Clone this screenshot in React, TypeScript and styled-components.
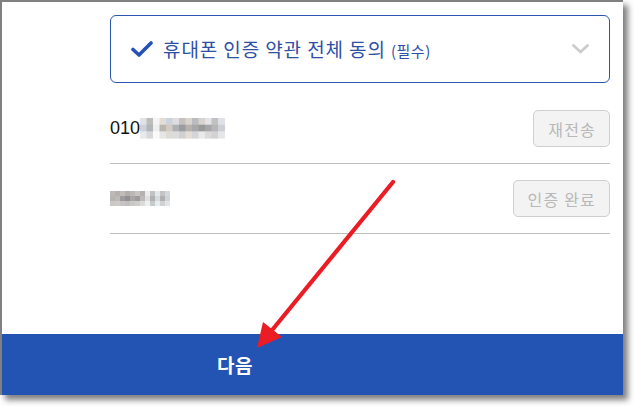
import React from "react";
import styled, { createGlobalStyle } from "styled-components";

const Global = createGlobalStyle`
  html, body { margin: 0; padding: 0; background: #ffffff; }
  body { font-family: "Liberation Sans", "Noto Sans CJK KR", sans-serif; }
`;

const Page = styled.div`
  position: relative;
  width: 634px;
  height: 406px;
  overflow: hidden;
  background: #ffffff;
`;

const Window = styled.div`
  width: 621px;
  height: 393px;
  border-top: 2px solid #808080;
  border-left: 2px solid #808080;
  box-shadow: 5px 5px 6px rgba(0, 0, 0, 0.5);
  background: #ffffff;
  display: flex;
  flex-direction: column;
`;

const Content = styled.div`
  flex: 1;
  padding: 13px 13px 0 108px;
  display: flex;
  flex-direction: column;
`;

const AgreeBox = styled.div`
  height: 66px;
  border: 1px solid #2c55b0;
  border-radius: 6px;
  display: flex;
  align-items: center;
  padding: 0 20px 0 20px;
  margin-bottom: 11px;
`;

const AgreeLabel = styled.span`
  flex: 1;
  margin-left: 10px;
  font-family: "Noto Sans CJK KR", sans-serif;
  font-size: 19px;
  letter-spacing: 0.9px;
  color: #2d4fa6;
  line-height: 1;
  padding-bottom: 2px;
`;

const Required = styled.span`
  font-size: 15px;
  letter-spacing: 0.5px;
`;

const Row = styled.div`
  display: flex;
  align-items: center;
  justify-content: space-between;
  padding: 16px 0;
  border-bottom: 1px solid #bdbdbd;
`;

const Value = styled.div`
  display: flex;
  align-items: center;
  font-family: "Liberation Sans", "Noto Sans CJK KR", sans-serif;
  font-size: 18px;
  color: #111111;
`;

const GhostButton = styled.button`
  height: 37px;
  padding: 0 13px 0 14px;
  border: 1px solid #cfcfcf;
  border-radius: 5px;
  background: #f3f3f3;
  color: #b8b8b8;
  font-family: "Noto Sans CJK KR", sans-serif;
  font-size: 16px;
  letter-spacing: 1.2px;
  line-height: 1;
  cursor: default;
`;

const Footer = styled.div`
  height: 61px;
  background: #2454b3;
  display: flex;
  align-items: center;
  padding-left: 215px;
  color: #ffffff;
  font-family: "Noto Sans CJK KR", sans-serif;
  font-weight: 700;
  font-size: 19px;
  letter-spacing: 0.5px;
`;

const ArrowLayer = styled.svg`
  position: absolute;
  left: 0;
  top: 0;
  pointer-events: none;
`;

type MosaicProps = { cols: number; rows: number; cellW: number; cellH: number; colors: string[] };

const Mosaic: React.FC<MosaicProps> = ({ cols, rows, cellW, cellH, colors }) => {
  const rects = [];
  for (let r = 0; r < rows; r++) {
    for (let c = 0; c < cols; c++) {
      rects.push(
        <rect
          key={`${r}-${c}`}
          x={c * cellW}
          y={r * cellH}
          width={cellW + 0.5}
          height={cellH + 0.5}
          fill={colors[(r * cols + c) % colors.length]}
        />
      );
    }
  }
  return (
    <svg width={cols * cellW} height={rows * cellH} style={{ display: "block" }}>
      {rects}
    </svg>
  );
};

const phoneColors = [
  "#dfe2e6", "#bdbdbb", "#f4f4f4", "#e3ddd6", "#cdd3dd", "#dedee2", "#c6c1bc", "#d9d4cf", "#babcbf", "#d9d3cf", "#e4e4e8", "#c1c1c1", "#e0e2e8",
  "#cdd1d9", "#b1b6ba", "#eeeeee", "#b9b5b1", "#d3cbc2", "#adb0b4", "#9a9ca1", "#b7b2ae", "#a8a8ab", "#999999", "#a6a6a9", "#b7b7bb", "#ccd0d4",
  "#e6e9ee", "#d8d8d8", "#fafafa", "#e6e6e6", "#dedbd6", "#dcdcdc", "#d0d0d0", "#e3ddd8", "#d5d5d8", "#e9e9e9", "#dadada", "#d2d2d2", "#e6e6ea",
];

const codeColors = [
  "#bdb9b7", "#b3b0ae", "#c1bcba", "#b0adab", "#bab7b6", "#c8c4c3", "#b5b3b2", "#ececec", "#c0c2c4", "#e2e9ee", "#c4c4c6", "#d4d8da",
  "#b7b3b1", "#bdb9b7", "#9d9b9c", "#918f93", "#a8a5a5", "#9c9a9b", "#bcbaba", "#e0e0e0", "#b2b1b2", "#d6dbdd", "#aeb0b2", "#cfd4d6",
  "#cbc8c6", "#cecac8", "#c6c4c3", "#c2bfbe", "#cac8c7", "#cfcccb", "#dbdada", "#efefef", "#c7caca", "#e6edf0", "#d0d2d4", "#e2e6e8",
];

const CheckIcon = () => (
  <svg width="22" height="16" viewBox="0 0 22 16">
    <path d="M2 8.5 L8 14 L20 2" fill="none" stroke="#2552b4" strokeWidth="3.6" strokeLinecap="round" strokeLinejoin="round" />
  </svg>
);

const ChevronIcon = () => (
  <svg width="17" height="10" viewBox="0 0 17 10">
    <path d="M1.5 1.5 L8.5 8 L15.5 1.5" fill="none" stroke="#cccccc" strokeWidth="2.8" strokeLinecap="round" strokeLinejoin="round" />
  </svg>
);

export default function App() {
  return (
    <>
      <Global />
      <Page>
        <Window>
          <Content>
            <AgreeBox>
              <CheckIcon />
              <AgreeLabel>
                휴대폰 인증 약관 전체 동의 <Required>(필수)</Required>
              </AgreeLabel>
              <ChevronIcon />
            </AgreeBox>
            <Row>
              <Value>
                010
                <Mosaic cols={13} rows={3} cellW={6.5} cellH={6.7} colors={phoneColors} />
              </Value>
              <GhostButton>재전송</GhostButton>
            </Row>
            <Row>
              <Value>
                <Mosaic cols={12} rows={3} cellW={5} cellH={5} colors={codeColors} />
              </Value>
              <GhostButton>인증 완료</GhostButton>
            </Row>
          </Content>
          <Footer>다음</Footer>
        </Window>
        <ArrowLayer width="634" height="406" viewBox="0 0 634 406">
          <line x1="393" y1="182" x2="273" y2="329" stroke="#ec1c24" strokeWidth="4.2" strokeLinecap="round" />
          <polygon points="257,348 263,322 282,337" fill="#ec1c24" />
        </ArrowLayer>
      </Page>
    </>
  );
}
